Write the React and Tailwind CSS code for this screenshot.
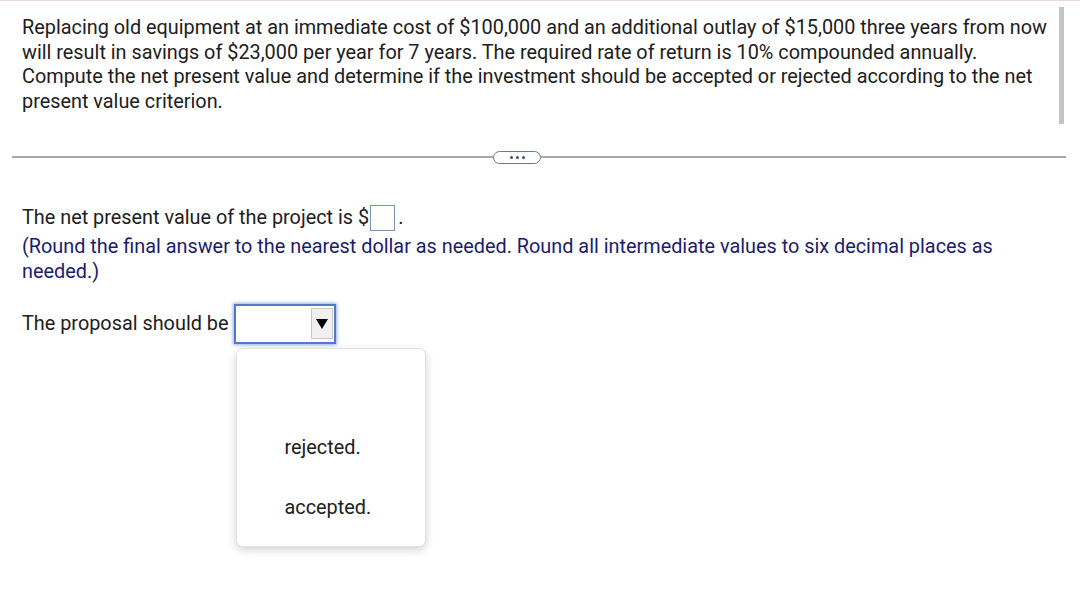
import React from 'react';

const App = () => {
  return (
    <div className="w-[1080px] h-[612px] bg-white relative overflow-hidden" style={{ fontFamily: 'Roboto, "Liberation Sans", sans-serif' }}>
      <div className="h-px bg-[#e8d6dc]" />

      {/* scrollbar */}
      <div className="absolute left-[1059px] top-[7px] w-[5px] h-[117px] bg-[#c4c4c4]" />

      {/* Question */}
      <div className="pl-[22px] pt-[15px] text-[19.85px] leading-[24.7px] text-[#202020] whitespace-nowrap">
        Replacing old equipment at an immediate cost of $100,000 and an additional outlay of $15,000 three years from now<br />
        will result in savings of $23,000 per year for 7 years. The required rate of return is 10% compounded annually.<br />
        Compute the net present value and determine if the investment should be accepted or rejected according to the net<br />
        present value criterion.
      </div>

      {/* divider */}
      <div className="mt-[36px] ml-[12px] w-[1054px] flex items-center">
        <div className="w-[481px] h-[2px] bg-[#a8a8a8]" />
        <div className="w-[48px] h-[13px] rounded-full border border-[#6b7a8c] bg-white flex items-center justify-center gap-[3px]">
          <span className="w-[3px] h-[3px] rounded-full bg-[#445566]" />
          <span className="w-[3px] h-[3px] rounded-full bg-[#445566]" />
          <span className="w-[3px] h-[3px] rounded-full bg-[#445566]" />
        </div>
        <div className="flex-1 h-[2px] bg-[#a8a8a8]" />
      </div>

      {/* Answer area */}
      <div className="pl-[22px] pt-[41px] text-[19.85px] text-[#202020]">
        <div className="flex items-center h-[26px]">
          <span>The net present value of the project is $</span>
          <span className="inline-block w-[25px] h-[26px] border border-[#7a95b8] ml-px" />
          <span className="ml-[3px]">.</span>
        </div>
        <div className="mt-[3px] leading-[25px] text-[#1c1c6c] whitespace-nowrap">
          (Round the final answer to the nearest dollar as needed. Round all intermediate values to six decimal places as<br />
          needed.)
        </div>

        <div className="mt-[20px] flex items-center">
          <span>The proposal should be</span>
          <div className="relative ml-[6px]">
            <div className="w-[102px] h-[40px] border-2 border-[#5577cc] shadow-[0_0_3px_1px_rgba(80,120,210,0.6)] bg-white flex items-center justify-end pr-[1px]">
              <div className="w-[22px] h-[31px] bg-[#f0f0f0] border border-[#c8c8c8] flex items-center justify-center">
                <svg width="12" height="10" viewBox="0 0 12 10"><path d="M0 0 L12 0 L6 10 Z" fill="#000" /></svg>
              </div>
            </div>
            <div className="absolute left-[2px] top-[44px] w-[190px] h-[199px] bg-white rounded-[7px] border border-[#e2e2e2] shadow-[0_3px_8px_rgba(0,0,0,0.18)]">
              <div className="pl-[47px] pt-[86px] leading-[25px] text-[#202020]">rejected.</div>
              <div className="pl-[47px] pt-[35px] leading-[25px] text-[#202020]">accepted.</div>
            </div>
          </div>
        </div>
      </div>
    </div>
  );
};

export default App;
